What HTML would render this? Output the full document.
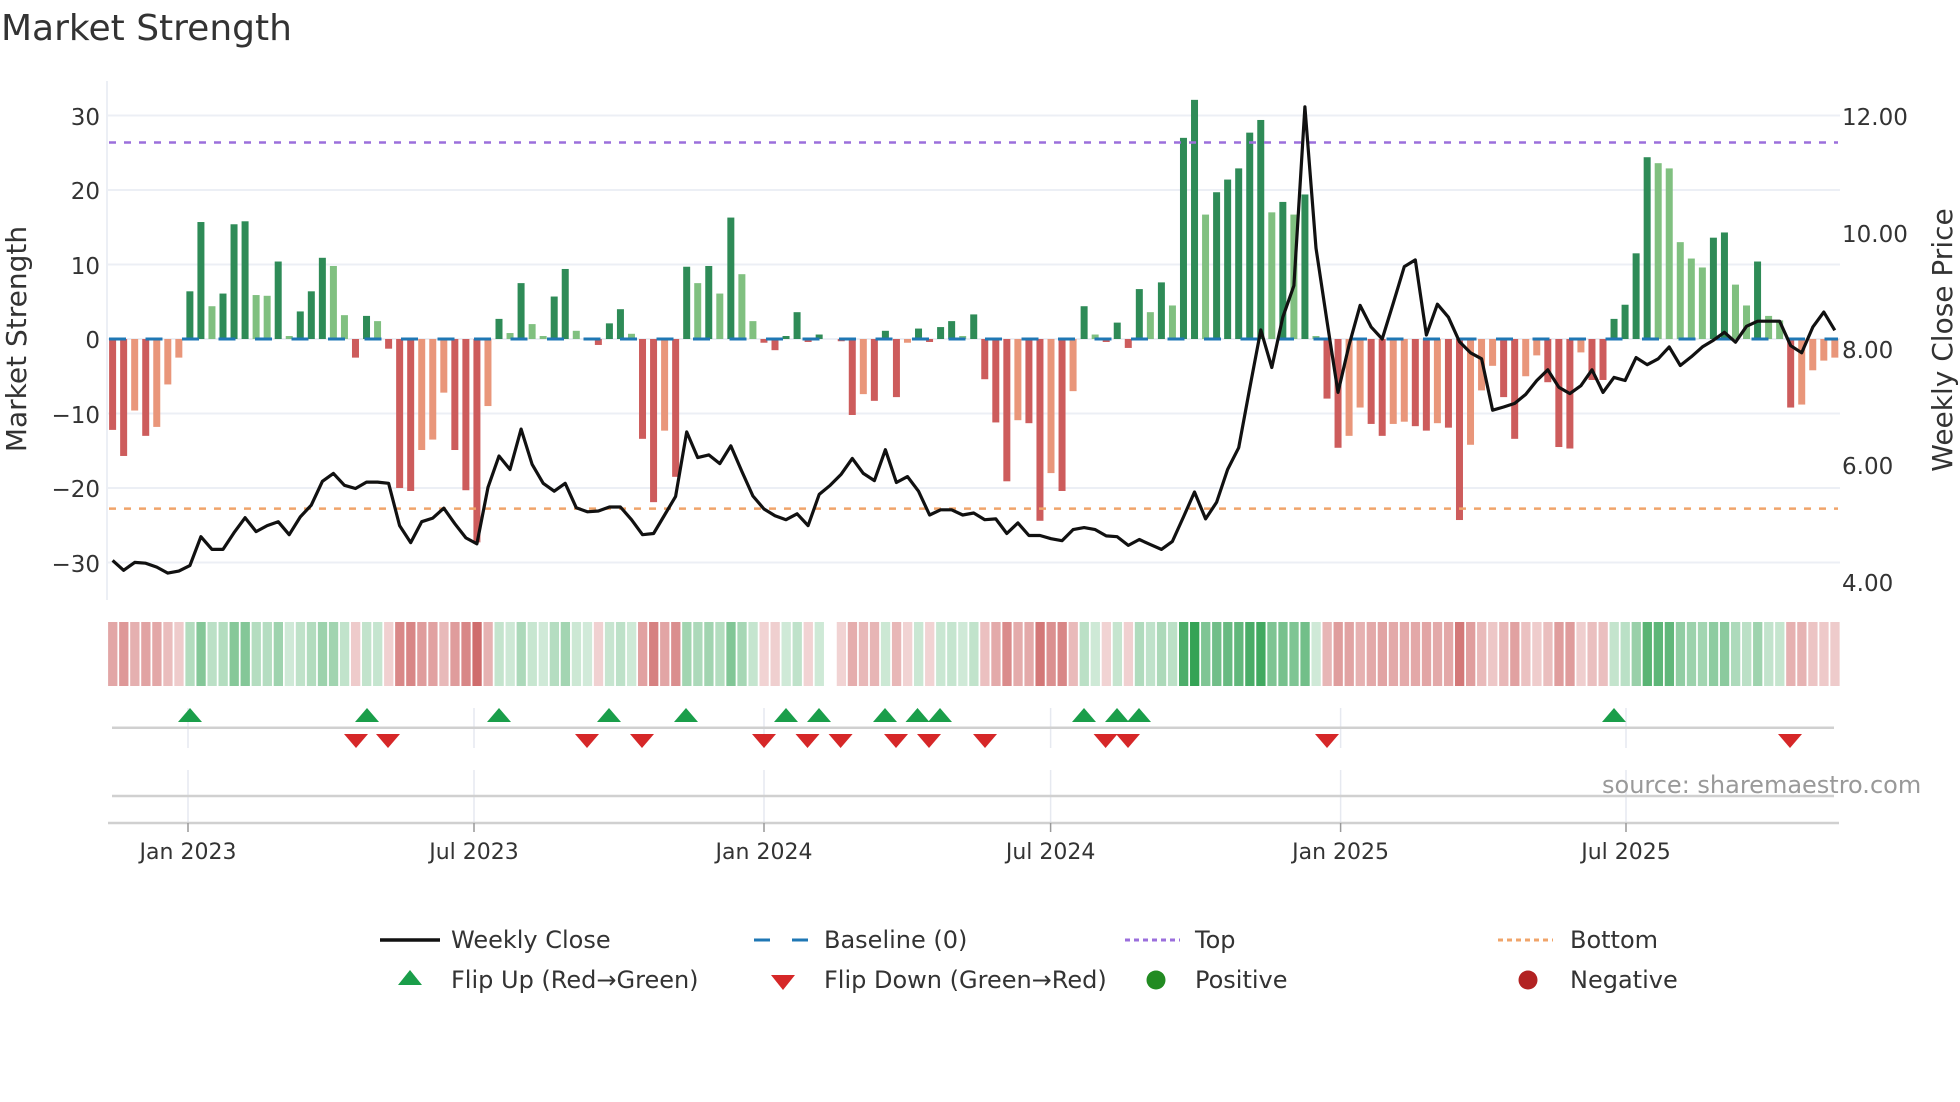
<!DOCTYPE html>
<html><head><meta charset="utf-8">
<style>
html,body{margin:0;padding:0;background:#fff;width:1960px;height:1102px;overflow:hidden}
svg{position:absolute;left:0;top:0;font-family:"DejaVu Sans","Liberation Sans",sans-serif}
</style></head><body>
<svg id="s" width="1960" height="1102" viewBox="0 0 1960 1102">
<text x="1" y="40" font-size="36" fill="#333">Market Strength</text>
<g id="grid" stroke="#eceff5" stroke-width="2">
<line x1="107" y1="115.5" x2="1840" y2="115.5"/><line x1="107" y1="190" x2="1840" y2="190"/>
<line x1="107" y1="264.5" x2="1840" y2="264.5"/><line x1="107" y1="339" x2="1840" y2="339"/>
<line x1="107" y1="413.5" x2="1840" y2="413.5"/><line x1="107" y1="488" x2="1840" y2="488"/>
<line x1="107" y1="562.5" x2="1840" y2="562.5"/>
<line x1="107" y1="81" x2="107" y2="600"/>
</g>
<g font-size="23" fill="#333" text-anchor="end">
<text x="100" y="125">30</text><text x="100" y="199">20</text><text x="100" y="274">10</text>
<text x="100" y="348">0</text><text x="100" y="423">−10</text><text x="100" y="497">−20</text><text x="100" y="572">−30</text>
</g>
<g font-size="23" fill="#333">
<text x="1842" y="125">12.00</text><text x="1842" y="242">10.00</text><text x="1842" y="358">8.00</text>
<text x="1842" y="474">6.00</text><text x="1842" y="591">4.00</text>
</g>
<text transform="translate(26,339) rotate(-90)" font-size="28" fill="#333" text-anchor="middle">Market Strength</text>
<text transform="translate(1952,340) rotate(-90)" font-size="28" fill="#333" text-anchor="middle">Weekly Close Price</text>
<g id="bars"></g>
<line x1="109" y1="339" x2="1838" y2="339" stroke="#1f77b4" stroke-width="3" stroke-dasharray="17 19.5"/>
<line x1="109" y1="142.5" x2="1838" y2="142.5" stroke="#9b6fdc" stroke-width="2.5" stroke-dasharray="7 8"/>
<line x1="109" y1="508.6" x2="1838" y2="508.6" stroke="#f0a46a" stroke-width="2.5" stroke-dasharray="7 8"/>
<polyline id="price" fill="none" stroke="#111" stroke-width="3.2" stroke-linejoin="round"/>
<g id="strip"></g>
<g stroke="#e6e9f0" stroke-width="1.5">
<line x1="188" y1="708" x2="188" y2="748"/><line x1="474" y1="708" x2="474" y2="748"/><line x1="764" y1="708" x2="764" y2="748"/>
<line x1="1050.6" y1="708" x2="1050.6" y2="748"/><line x1="1340.6" y1="708" x2="1340.6" y2="748"/><line x1="1626" y1="708" x2="1626" y2="748"/>
<line x1="188" y1="770" x2="188" y2="823"/><line x1="474" y1="770" x2="474" y2="823"/><line x1="764" y1="770" x2="764" y2="823"/>
<line x1="1050.6" y1="770" x2="1050.6" y2="823"/><line x1="1340.6" y1="770" x2="1340.6" y2="823"/><line x1="1626" y1="770" x2="1626" y2="823"/>
</g>
<line x1="112" y1="727.7" x2="1834" y2="727.7" stroke="#d0d0d0" stroke-width="2.5"/>
<line x1="112" y1="796" x2="1834" y2="796" stroke="#d0d0d0" stroke-width="2.5"/>
<line x1="108" y1="823" x2="1839" y2="823" stroke="#d0d0d0" stroke-width="2.5"/>
<g stroke="#999" stroke-width="1.5">
<line x1="188" y1="823" x2="188" y2="832"/><line x1="474" y1="823" x2="474" y2="832"/><line x1="764" y1="823" x2="764" y2="832"/>
<line x1="1050.6" y1="823" x2="1050.6" y2="832"/><line x1="1340.6" y1="823" x2="1340.6" y2="832"/><line x1="1626" y1="823" x2="1626" y2="832"/>
</g>
<g id="sig"></g>
<g font-size="22" fill="#333" text-anchor="middle">
<text x="188" y="859">Jan 2023</text><text x="474" y="859">Jul 2023</text><text x="764" y="859">Jan 2024</text>
<text x="1050.6" y="859">Jul 2024</text><text x="1340.6" y="859">Jan 2025</text><text x="1626" y="859">Jul 2025</text>
</g>
<text x="1602" y="793" font-size="24" fill="#999">source: sharemaestro.com</text>
<g font-size="24" fill="#333">
<line x1="380" y1="940" x2="440" y2="940" stroke="#111" stroke-width="3.5"/>
<text x="451" y="948">Weekly Close</text>
<line x1="754" y1="940" x2="770" y2="940" stroke="#1f77b4" stroke-width="3"/>
<line x1="792" y1="940" x2="808" y2="940" stroke="#1f77b4" stroke-width="3"/>
<text x="824" y="948">Baseline (0)</text>
<line x1="1125" y1="940" x2="1180" y2="940" stroke="#9b6fdc" stroke-width="3" stroke-dasharray="5 4"/>
<text x="1195" y="948">Top</text>
<line x1="1498" y1="940" x2="1553" y2="940" stroke="#f0a46a" stroke-width="3" stroke-dasharray="5 4"/>
<text x="1570" y="948">Bottom</text>
<polygon points="410,970 398,985 422,985" fill="#1a9e4a"/>
<text x="451" y="988">Flip Up (Red→Green)</text>
<polygon points="783,990 771,975 795,975" fill="#d62728"/>
<text x="824" y="988">Flip Down (Green→Red)</text>
<circle cx="1156" cy="980" r="9.5" fill="#228b22"/>
<text x="1195" y="988">Positive</text>
<circle cx="1528" cy="980" r="9.5" fill="#b22222"/>
<text x="1570" y="988">Negative</text>
</g>
</svg>
<script>
var V=[-12.2,-15.7,-9.6,-13,-11.8,-6.1,-2.5,6.4,15.7,4.4,6.1,15.4,15.8,5.9,5.8,10.4,0.4,3.7,6.4,10.9,9.8,3.2,-2.5,3.1,2.4,-1.3,-20,-20.4,-14.9,-13.5,-7.2,-14.9,-20.3,-27.3,-9,2.7,0.8,7.5,2,0.4,5.7,9.4,1.1,0,-0.8,2.1,4,0.7,-13.4,-21.9,-12.3,-18.5,9.7,7.5,9.8,6.1,16.3,8.7,2.4,-0.5,-1.5,0.4,3.6,-0.4,0.6,0,-0.3,-10.2,-7.4,-8.3,1.1,-7.8,-0.5,1.4,-0.4,1.6,2.4,0.4,3.3,-5.4,-11.2,-19.1,-10.9,-11.3,-24.4,-18,-20.4,-7,4.4,0.6,-0.4,2.2,-1.2,6.7,3.6,7.6,4.5,27,32.1,16.7,19.7,21.4,22.9,27.7,29.4,17,18.4,16.7,19.4,0.4,-8,-14.6,-13,-9.2,-11.4,-13,-11.4,-11.1,-11.7,-12.3,-11.3,-11.9,-24.3,-14.2,-6.9,-3.6,-7.8,-13.4,-5,-2.2,-5.8,-14.5,-14.7,-1.8,-5.5,-5.5,2.7,4.6,11.5,24.4,23.6,22.9,13,10.8,9.6,13.6,14.3,7.3,4.5,10.4,3.1,2.5,-9.2,-8.8,-4.2,-2.9,-2.5];
var L=[1215,1240,1220,1222,1232,1247,1242,1228,1155,1187,1187,1145,1107,1142,1127,1117,1150,1105,1075,1015,995,1025,1033,1017,1017,1020,1127,1170,1117,1108,1083,1122,1158,1173,1030,951,985,883,972,1020,1040,1020,1082,1092,1090,1080,1080,1112,1150,1147,1100,1053,890,955,948,970,925,990,1052,1085,1102,1112,1097,1127,1048,1025,997,957,995,1013,935,1018,1003,1040,1100,1087,1087,1100,1095,1112,1110,1147,1120,1152,1152,1160,1165,1137,1132,1137,1153,1155,1177,1162,1175,1187,1167,1105,1042,1110,1068,985,930,780,632,727,600,520,68,425,610,790,670,570,625,655,565,472,455,645,567,600,662,690,705,835,827,818,795,760,733,777,793,773,733,790,752,760,702,720,705,675,722,700,675,658,638,663,623,610,610,610,672,690,625,587,633];
var F=["d","d","l","d","l","l","l","d","d","l","d","d","d","l","l","d","l","d","d","d","l","l","d","d","l","d","d","d","l","l","l","d","d","d","l","d","l","d","l","l","d","d","l","l","d","d","d","l","d","d","l","d","d","l","d","l","d","l","l","d","d","d","d","d","d","l","d","d","l","d","d","d","l","d","d","d","d","l","d","d","d","d","l","d","d","l","d","l","d","l","d","d","d","d","l","d","l","d","d","l","d","d","d","d","d","l","d","l","d","l","d","d","l","l","d","d","l","l","d","d","l","d","d","l","l","l","d","d","l","l","d","d","d","l","d","d","d","d","d","d","l","l","l","l","l","d","d","l","l","d","l","l","d","l","l","l","l"];
var NS="http://www.w3.org/2000/svg";
function el(t,a,p){var e=document.createElementNS(NS,t);for(var k in a)e.setAttribute(k,a[k]);p.appendChild(e);return e;}
var bars=document.getElementById('bars'),strip=document.getElementById('strip'),sig=document.getElementById('sig');
var x0=112.6,s=11.04,pts=[];
for(var i=0;i<V.length;i++){
 var x=x0+s*i,v=V[i],dk=F[i]==='d',h=Math.abs(v)*7.45;
 var c=v>=0?(dk?'#2e8b57':'#80c080'):(dk?'#cd5c5c':'#e9967a');
 if(h>0.3) el('rect',{x:x-3.5,y:v>=0?339-h:339,width:7,height:h,fill:c},bars);
 pts.push(x.toFixed(1)+','+(80+L[i]/2.529).toFixed(1));
 if(i!==65){
  var t=Math.min(Math.abs(v)/32,1),a,col;
  if(v>=0){a=0.22+0.75*t;col=[46,160,80];}else{a=0.25+0.72*t;col=[200,85,85];}
  var r=Math.round(255-(255-col[0])*a),g=Math.round(255-(255-col[1])*a),b=Math.round(255-(255-col[2])*a);
  el('rect',{x:x-4.5,y:622,width:9.3,height:64,fill:'rgb('+r+','+g+','+b+')'},strip);
 }
}
document.getElementById('price').setAttribute('points',pts.join(' '));
[190,367,499,609,686,786,819,885,917.5,940,1084,1117,1139,1614].forEach(function(x){el('polygon',{points:x+',708 '+(x-12)+',722 '+(x+12)+',722',fill:'#1a9e4a'},sig);});
[356,388,587,642,764,807.5,840.6,896,929,985,1105.6,1128,1327,1790].forEach(function(x){el('polygon',{points:x+',748 '+(x-12)+',734 '+(x+12)+',734',fill:'#d62728'},sig);});
</script>
</body></html>
